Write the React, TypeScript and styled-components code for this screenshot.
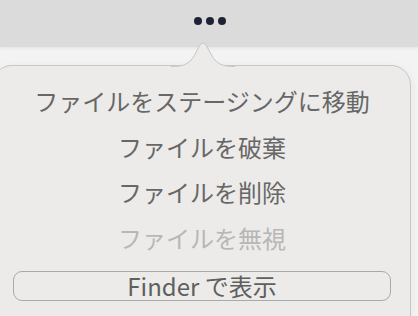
import React from 'react';
import styled, { createGlobalStyle } from 'styled-components';

const GlobalStyle = createGlobalStyle`
  html, body {
    margin: 0;
    padding: 0;
    background: #f3f3f3;
    overflow: hidden;
  }
  body {
    font-family: 'Noto Sans CJK JP', 'Noto Sans', sans-serif;
  }
`;

const Page = styled.div`
  width: 418px;
  height: 316px;
  display: flex;
  flex-direction: column;
  overflow: hidden;
`;

const Toolbar = styled.div`
  height: 47px;
  flex-shrink: 0;
  background: #dbdbdb;
  box-shadow: 0 1px 3px rgba(0, 0, 0, 0.08);
  display: flex;
  justify-content: center;
  align-items: flex-start;
  padding-top: 17px;
  box-sizing: border-box;
  position: relative;
  z-index: 1;
`;

const MoreButton = styled.div`
  display: flex;
  gap: 4px;
  margin-left: 2px;
`;

const Dot = styled.span`
  width: 8px;
  height: 8px;
  border-radius: 50%;
  background: #1e2235;
`;

const Popover = styled.div`
  position: relative;
  z-index: 2;
  margin: 18px 7px 0 -8px;
  flex: 1;
  min-height: 270px;
  background: #ecebe9;
  border: 1px solid #c6c6c6;
  border-radius: 20px;
  box-shadow: 0 2px 10px rgba(0, 0, 0, 0.06);
  padding: 12px 19px 0 20px;
  display: flex;
  flex-direction: column;
`;

const Arrow = styled.svg`
  position: absolute;
  top: -25px;
  left: 178px;
  overflow: visible;
`;

const MenuItem = styled.div<{ $disabled?: boolean }>`
  height: 45.6px;
  line-height: 45.6px;
  text-align: center;
  font-size: 24px;
  color: ${p => (p.$disabled ? '#b7b7b7' : '#676767')};
  white-space: nowrap;
`;

const ActionButton = styled.div`
  margin-top: 11px;
  height: 30px;
  box-sizing: border-box;
  border: 1.5px solid #a9a9a9;
  border-radius: 9px;
  display: flex;
  align-items: center;
  justify-content: center;
  font-size: 24px;
  line-height: 26px;
  color: #5f5f5f;
  white-space: nowrap;
`;

const items = [
  { label: 'ファイルをステージングに移動' },
  { label: 'ファイルを破棄' },
  { label: 'ファイルを削除' },
  { label: 'ファイルを無視', disabled: true },
];

export default function App() {
  return (
    <Page>
      <GlobalStyle />
      <Toolbar>
        <MoreButton>
          <Dot />
          <Dot />
          <Dot />
        </MoreButton>
      </Toolbar>
      <Popover>
        <Arrow width="64" height="27" viewBox="0 0 64 27">
          <path
            d="M0 25.5 C 13 25.5, 18 23, 23 15 L 29 4 Q 32 0, 35 4 L 41 15 C 46 23, 51 25.5, 64 25.5 L 64 27 L 0 27 Z"
            fill="#ecebe9"
          />
          <path
            d="M0 25.5 C 13 25.5, 18 23, 23 15 L 29 4 Q 32 0, 35 4 L 41 15 C 46 23, 51 25.5, 64 25.5"
            fill="none"
            stroke="#c6c6c6"
            strokeWidth="1"
          />
        </Arrow>
        {items.map(item => (
          <MenuItem key={item.label} $disabled={item.disabled}>
            {item.label}
          </MenuItem>
        ))}
        <ActionButton>Finder で表示</ActionButton>
      </Popover>
    </Page>
  );
}
